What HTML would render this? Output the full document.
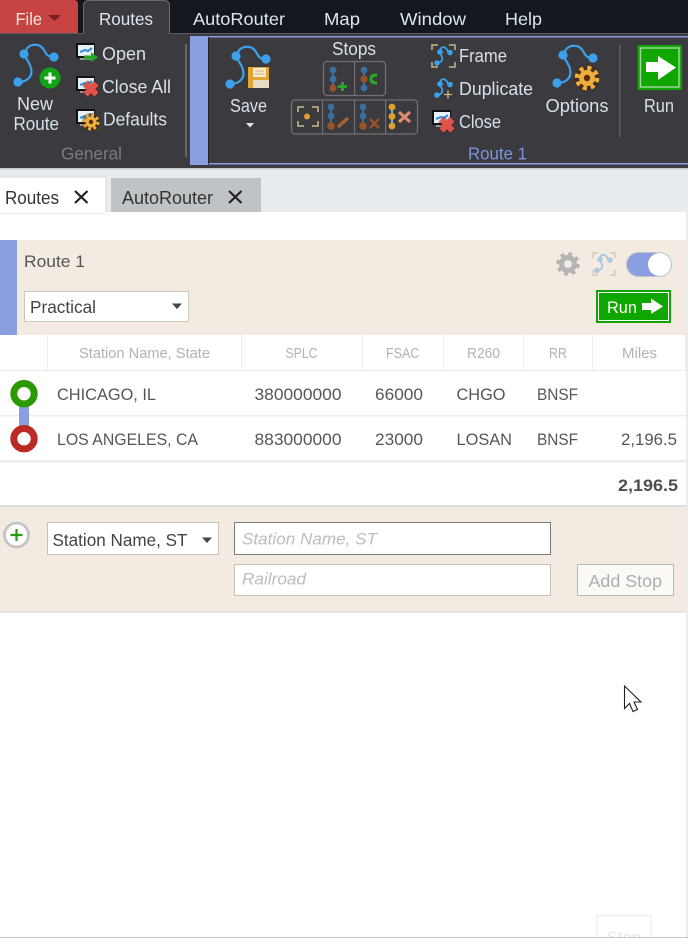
<!DOCTYPE html>
<html><head><meta charset="utf-8"><style>
html,body{margin:0;padding:0;background:#fff;width:688px;height:938px;overflow:hidden}
svg{display:block;font-family:"Liberation Sans",sans-serif}
.m{fill:#dbe5ee;font-size:17.5px}
.r{fill:#d6e0e9;font-size:18px}
.h{fill:#b2b2b2;font-size:14.5px}
.c{fill:#565656;font-size:17px}
</style></head><body>
<svg width="688" height="938" viewBox="0 0 688 938" xmlns="http://www.w3.org/2000/svg">
<defs>
<g id="rt" fill="none"><path d="M18 82C28 82 33 76 31 68C29 60 22 56 26 50C30 43 40 43 44 50C47 56 49 57 54 57" stroke="#3da0ea" stroke-width="2.200"/><circle cx="24" cy="54" r="4.600" fill="#3da0ea"/><circle cx="54" cy="57" r="4.600" fill="#3da0ea"/><circle cx="18" cy="82" r="4.600" fill="#3da0ea"/></g>
<g id="rs" fill="none"><path d="M0 11C4 11 6 8 5 5C4 2 2 0 3.500 -3C5 -6 9 -5 10 -2C11 0 12 0 13 .5" stroke="currentColor" stroke-width="1.800"/><circle cx="3" cy="0" r="2.800" fill="currentColor"/><circle cx="13" cy=".5" r="2.800" fill="currentColor"/><circle cx="0" cy="11" r="2.800" fill="currentColor"/></g>
<g id="doc"><rect x="-1" y="-1" width="19" height="15" fill="#111"/><rect x="1" y="1" width="16" height="11" fill="#e8f0f8"/><path d="M3 8L8 6L11 7L15 4" stroke="#3a8fd8" stroke-width="2.200" fill="none"/><rect x="3" y="14" width="12" height="2" fill="#999"/></g>
<g id="x"><path d="M-6-6L6 6M6-6L-6 6" stroke="#5a1a14" stroke-width="8" opacity=".45"/><path d="M-5.500-5.500L5.500 5.500M5.500-5.500L-5.500 5.500" stroke="#e0534a" stroke-width="6"/></g>
<g id="gear"><circle r="9" fill="#4a2410" opacity=".55"/><circle r="5.500" fill="#efb03a"/><circle r="7" fill="none" stroke="#efb03a" stroke-width="3" stroke-dasharray="2.800 2.700"/><circle r="2.200" fill="#5a2a10"/></g>
<g id="sl"><path d="M0 0V18" stroke="#3b6f9f" stroke-width="2"/><circle cy="0" r="3.400" fill="#3b6f9f"/><circle cy="9" r="3.400" fill="#3b6f9f"/></g>
</defs>

<rect width="688" height="938" fill="#fff"/>
<rect width="688" height="33" fill="#14171f"/>
<path d="M0 33V0H74Q78 0 78 4V33Z" fill="#c74342"/>
<text x="15.500" y="25" font-size="17.500" style="fill:#f3e6da" textLength="26.500" lengthAdjust="spacingAndGlyphs">File</text>
<path d="M48 15H61L54.500 21Z" fill="#7c1f1f"/>
<rect x="0" y="33" width="688" height="136" fill="#3a3a3f"/>
<rect x="0" y="33" width="688" height="1" fill="#5a5a60"/>
<path d="M83.500 34V6Q83.500 .5 89 .5H164Q169.500 .5 169.500 6V34" fill="#3a3a3f" stroke="#6b6b72"/>
<text x="99" y="25" class="m" textLength="54" lengthAdjust="spacingAndGlyphs">Routes</text>
<text x="193" y="25" class="m" textLength="92" lengthAdjust="spacingAndGlyphs">AutoRouter</text>
<text x="324" y="25" class="m" textLength="36" lengthAdjust="spacingAndGlyphs">Map</text>
<text x="400" y="25" class="m" textLength="66" lengthAdjust="spacingAndGlyphs">Window</text>
<text x="505" y="25" class="m" textLength="37" lengthAdjust="spacingAndGlyphs">Help</text>

<use href="#rt"/>
<circle cx="50" cy="78" r="10.500" fill="#0fa314"/><path d="M44.500 78H55.500M50 72.500V83.500" stroke="#fff" stroke-width="3"/>
<text x="17" y="110" class="r" textLength="36" lengthAdjust="spacingAndGlyphs">New</text>
<text x="13.500" y="130" class="r" textLength="45.500" lengthAdjust="spacingAndGlyphs">Route</text>
<use href="#doc" x="77" y="44"/><path d="M84 55.500H91V52L98 57.500L91 62V59.500H84Z" fill="#2aa52a"/>
<text x="102" y="60" class="r" textLength="44" lengthAdjust="spacingAndGlyphs">Open</text>
<use href="#doc" x="77" y="77"/><use href="#x" x="91" y="89"/>
<text x="102" y="93" class="r" textLength="69" lengthAdjust="spacingAndGlyphs">Close All</text>
<use href="#doc" x="77" y="110"/><use href="#gear" x="91" y="122"/>
<text x="103" y="125.500" class="r" textLength="64" lengthAdjust="spacingAndGlyphs">Defaults</text>
<text x="61" y="159.500" font-size="17.500" fill="#777b82" textLength="61" lengthAdjust="spacingAndGlyphs">General</text>
<rect x="185" y="44" width="2" height="113" fill="#66666b"/>

<rect x="190" y="36" width="498" height="1.500" fill="#8a9fe0"/>
<rect x="190" y="163" width="498" height="1.500" fill="#8a9fe0"/>
<rect x="190" y="36" width="18" height="129" fill="#8a9fe0"/>
<rect x="208" y="37" width="1" height="127" fill="#25262b"/>

<use href="#rt" x="212" y="2"/>
<rect x="248" y="67" width="21" height="21" fill="#e2a637"/><rect x="253" y="68" width="13" height="9" fill="#f6ead0"/><path d="M255 71H264M255 74H264" stroke="#d8b070"/><rect x="253" y="80" width="16" height="8" fill="#e9dcc5"/>
<text x="230" y="112" class="r" textLength="37" lengthAdjust="spacingAndGlyphs">Save</text>
<path d="M246 123H254L250 127.500Z" fill="#e6e6e6"/>
<text x="332" y="55" class="r" textLength="44" lengthAdjust="spacingAndGlyphs">Stops</text>

<rect x="323.500" y="61.500" width="62" height="34" rx="3.500" fill="none" stroke="#6f6f75" stroke-width="1.300"/>
<rect x="354" y="62" width="1.200" height="33" fill="#6f6f75"/>
<rect x="291.500" y="100" width="126" height="34" rx="3.500" fill="none" stroke="#6f6f75" stroke-width="1.300"/>
<rect x="322" y="100" width="1.200" height="34" fill="#6f6f75"/><rect x="354" y="100" width="1.200" height="34" fill="#6f6f75"/><rect x="385" y="100" width="1.200" height="34" fill="#6f6f75"/>

<use href="#sl" x="333" y="70"/><circle cx="333" cy="88" r="3.600" fill="#9a5228"/><path d="M338 86.500H347M342.500 82V91" stroke="#2aa52a" stroke-width="3"/>
<use href="#sl" x="364" y="70"/><circle cx="364" cy="79" r="3.600" fill="#9a5228"/><circle cx="364" cy="88" r="3.400" fill="#3b6f9f"/><path d="M377 75Q371 75 371 79Q371 83 377 83" fill="none" stroke="#2aa52a" stroke-width="3.200"/>
<path d="M298 112V107H304M312 107H318V112M318 121V126H312M304 126H298V121" fill="none" stroke="#cdbd8c" stroke-width="1.500"/><circle cx="307" cy="116.500" r="3" fill="#e2a030"/>
<use href="#sl" x="331" y="107"/><circle cx="331" cy="126" r="3.800" fill="#9a5228"/><path d="M338 127L348 118" stroke="#a8602c" stroke-width="3.500"/>
<use href="#sl" x="363" y="107"/><circle cx="363" cy="126" r="3.800" fill="#9a5228"/><path d="M370 119L379 128M379 119L370 128" stroke="#9a5228" stroke-width="2.500"/>
<path d="M392 107V126" stroke="#6fb5e6" stroke-width="2"/><circle cx="392" cy="107" r="3.400" fill="#e0a030"/><circle cx="392" cy="116.500" r="3.400" fill="#e0a030"/><circle cx="392" cy="126" r="3.400" fill="#e0a030"/><path d="M399 112L410 122M410 112L399 122" stroke="#e08a70" stroke-width="3.200"/>

<path d="M432 50V45H438M449 45H455V50M455 62V67H449M438 67H432V62" fill="none" stroke="#c8b88a" stroke-width="1.500"/>
<use href="#rs" x="437" y="52" style="color:#3da0ea"/>
<use href="#rs" x="437" y="84" style="color:#3da0ea"/><path d="M444 94.500H452M448 90.500V98.500" stroke="#c8b88a" stroke-width="1.300"/>
<text x="459" y="62" class="r" textLength="48" lengthAdjust="spacingAndGlyphs">Frame</text>
<text x="459" y="95" class="r" textLength="74" lengthAdjust="spacingAndGlyphs">Duplicate</text>
<use href="#doc" x="433" y="111"/><use href="#x" x="447" y="125"/>
<text x="459" y="128" class="r" textLength="42" lengthAdjust="spacingAndGlyphs">Close</text>
<use href="#rt" x="539" y="1"/>
<use href="#gear" transform="translate(587 78) scale(1.450)"/>
<text x="545.500" y="112" class="r" textLength="63" lengthAdjust="spacingAndGlyphs">Options</text>
<rect x="619" y="45" width="1.500" height="92" fill="#5c5c61"/>
<rect x="637.500" y="45" width="44.500" height="45" rx="2" fill="#10a600"/>
<rect x="640.500" y="48" width="38.500" height="39" fill="none" stroke="#9fd39a" stroke-width="1.500"/>
<path d="M646 62H658V56L676 67.500L658 80V72H646Z" fill="#fff"/>
<text x="644" y="112" class="r" textLength="30" lengthAdjust="spacingAndGlyphs">Run</text>
<text x="468" y="159.500" font-size="17.500" fill="#7a95dc" textLength="59" lengthAdjust="spacingAndGlyphs">Route 1</text>

<rect x="0" y="168" width="688" height="1.500" fill="#c8cacc"/>
<rect x="0" y="169.500" width="688" height="42.500" fill="#e9ecef"/>
<rect x="-1" y="177" width="107" height="36" fill="#fff" stroke="#d8dadc"/>
<text x="5" y="204" font-size="18" fill="#333" textLength="54" lengthAdjust="spacingAndGlyphs">Routes</text>
<path d="M75 191L87.500 203M87.500 191L75 203" stroke="#222" stroke-width="2.200"/>
<rect x="111" y="178" width="150" height="34" fill="#bfc3c5"/>
<text x="122" y="204" font-size="18" fill="#333" textLength="91" lengthAdjust="spacingAndGlyphs">AutoRouter</text>
<path d="M229 191L241.500 203M241.500 191L229 203" stroke="#222" stroke-width="2.200"/>
<rect x="0" y="212" width="686" height="1" fill="#fff"/>

<rect x="0" y="240" width="686" height="95" fill="#f3ebe1"/>
<rect x="0" y="240" width="17" height="95" fill="#8a9fe0"/>
<text x="24" y="267" font-size="17" fill="#555" textLength="61" lengthAdjust="spacingAndGlyphs">Route 1</text>
<rect x="24.500" y="291.500" width="164" height="30" fill="#fff" stroke="#cfc8bc"/>
<text x="30" y="313" font-size="17.500" fill="#444" textLength="66" lengthAdjust="spacingAndGlyphs">Practical</text>
<path d="M172 303.500H182L177 309Z" fill="#444"/>
<g transform="translate(568 264)"><circle r="6.500" fill="none" stroke="#b4b4b4" stroke-width="5"/><circle r="10" fill="none" stroke="#b4b4b4" stroke-width="3.500" stroke-dasharray="3.900 3.950"/></g>
<path d="M593 258V253H598M610 253H615V258M615 270V275H610M598 275H593V270" fill="none" stroke="#d5cdb8" stroke-width="1.500"/>
<use href="#rs" x="597" y="259.500" style="color:#a9cbe0"/>
<rect x="626.500" y="252.500" width="45" height="24" rx="12" fill="#8a9fe0" stroke="#c5c5c5"/>
<circle cx="659.500" cy="264.500" r="11.500" fill="#fff"/>
<rect x="596.500" y="290.500" width="74" height="32" fill="#10a600" stroke="#10a600"/>
<rect x="598.500" y="292.500" width="70" height="28" fill="none" stroke="#fff"/>
<text x="607" y="313" font-size="17" fill="#fff" textLength="30" lengthAdjust="spacingAndGlyphs">Run</text>
<path d="M642 303H651V298.500L663 306.500L651 314V310H642Z" fill="#fff"/>

<g fill="#ededed"><rect x="47" y="335" width="1" height="35"/><rect x="241" y="335" width="1" height="35"/><rect x="362" y="335" width="1" height="35"/><rect x="443" y="335" width="1" height="35"/><rect x="523" y="335" width="1" height="35"/><rect x="592" y="335" width="1" height="35"/><rect x="685" y="335" width="1" height="35"/></g>
<text x="79" y="358" class="h" textLength="131" lengthAdjust="spacingAndGlyphs">Station Name, State</text>
<text x="285.500" y="358" class="h" textLength="32" lengthAdjust="spacingAndGlyphs">SPLC</text>
<text x="386" y="358" class="h" textLength="33.500" lengthAdjust="spacingAndGlyphs">FSAC</text>
<text x="467" y="358" class="h" textLength="33" lengthAdjust="spacingAndGlyphs">R260</text>
<text x="549" y="358" class="h" textLength="18" lengthAdjust="spacingAndGlyphs">RR</text>
<text x="622" y="358" class="h" textLength="35" lengthAdjust="spacingAndGlyphs">Miles</text>
<rect x="0" y="370" width="686" height="1" fill="#ececec"/>
<rect x="0" y="415" width="686" height="1.500" fill="#ececec"/>
<rect x="0" y="460" width="686" height="2.500" fill="#ececec"/>
<rect x="0" y="505" width="686" height="2" fill="#dfdfdf"/>
<rect x="19" y="405" width="10" height="24" fill="#8a9fe0"/>
<circle cx="24" cy="393.700" r="10.200" fill="#fff" stroke="#2b9a00" stroke-width="7"/>
<circle cx="24" cy="438.700" r="10.200" fill="#fff" stroke="#ba2b26" stroke-width="7"/>

<text x="57" y="400" class="c" textLength="99" lengthAdjust="spacingAndGlyphs">CHICAGO, IL</text>
<text x="254.500" y="400" class="c" textLength="87" lengthAdjust="spacingAndGlyphs">380000000</text>
<text x="375" y="400" class="c" textLength="48" lengthAdjust="spacingAndGlyphs">66000</text>
<text x="456.500" y="400" class="c" textLength="49" lengthAdjust="spacingAndGlyphs">CHGO</text>
<text x="537" y="400" class="c" textLength="41" lengthAdjust="spacingAndGlyphs">BNSF</text>
<text x="57" y="445" class="c" textLength="141" lengthAdjust="spacingAndGlyphs">LOS ANGELES, CA</text>
<text x="254.500" y="445" class="c" textLength="87" lengthAdjust="spacingAndGlyphs">883000000</text>
<text x="375" y="445" class="c" textLength="48" lengthAdjust="spacingAndGlyphs">23000</text>
<text x="456.500" y="445" class="c" textLength="55.500" lengthAdjust="spacingAndGlyphs">LOSAN</text>
<text x="537" y="445" class="c" textLength="41" lengthAdjust="spacingAndGlyphs">BNSF</text>
<text x="621" y="445" class="c" textLength="56" lengthAdjust="spacingAndGlyphs">2,196.5</text>
<text x="618" y="491" font-size="17" font-weight="bold" fill="#4e4e4e" textLength="60" lengthAdjust="spacingAndGlyphs">2,196.5</text>

<rect x="0" y="507" width="686" height="104" fill="#f3ebe1"/>
<rect x="0" y="611" width="686" height="1.500" fill="#dedcd8"/>
<circle cx="16.500" cy="535" r="12" fill="#fff" stroke="#c4c4c4" stroke-width="2.800"/>
<path d="M10.500 535H22.500M16.500 529V541" stroke="#2c9a10" stroke-width="2.200"/>
<rect x="47.500" y="522.500" width="171" height="32" fill="#fff" stroke="#c9c0b4"/>
<text x="52.500" y="546" font-size="17.500" fill="#444" textLength="135" lengthAdjust="spacingAndGlyphs">Station Name, ST</text>
<path d="M202 537.500H212L207 543Z" fill="#444"/>
<rect x="234.500" y="522.500" width="316" height="32" fill="#fff" stroke="#7a7a76"/>
<text x="242" y="544.500" font-size="17" font-style="italic" fill="#bcbcbc" textLength="135" lengthAdjust="spacingAndGlyphs">Station Name, ST</text>
<rect x="234.500" y="564.500" width="316" height="31" fill="#fff" stroke="#c9c0b4"/>
<text x="242" y="584.500" font-size="17" font-style="italic" fill="#bcbcbc" textLength="64" lengthAdjust="spacingAndGlyphs">Railroad</text>
<rect x="577.500" y="564.500" width="96" height="31" fill="#fbf9f6" stroke="#b8b8b6"/>
<text x="588.500" y="587" font-size="17.500" fill="#aeaeae" textLength="73.500" lengthAdjust="spacingAndGlyphs">Add Stop</text>

<rect x="686" y="212" width="2" height="726" fill="#e9ecef"/>
<path d="M624.500 686V708.500L629.500 703.500L633 711.500L637.500 709.500L634 702L641 702Z" fill="#fff" stroke="#1c2028" stroke-width="1.100"/>
<rect x="597" y="915.500" width="54" height="24" fill="none" stroke="#f2f2f2" stroke-width="1.500"/>
<text x="607" y="943" font-size="17" fill="#e6e6e6" textLength="34" lengthAdjust="spacingAndGlyphs">Stop</text>
<rect x="0" y="937" width="688" height="1" fill="#c4c6c8"/>
</svg>
</body></html>
